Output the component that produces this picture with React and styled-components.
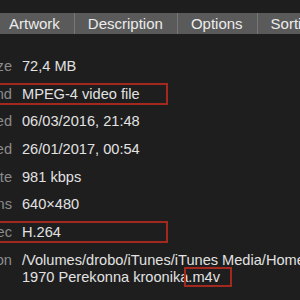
import React from 'react'
import styled, { createGlobalStyle } from 'styled-components'

const GlobalStyle = createGlobalStyle`
  body {
    margin: 0;
    background: #1e1e1e;
  }
`

const Window = styled.div`
  width: 300px;
  height: 300px;
  overflow: hidden;
  padding-top: 13px;
  box-sizing: border-box;
  background: #1e1e1e;
  font-family: 'Liberation Sans', Arial, sans-serif;
`

const TabBar = styled.div`
  display: flex;
  height: 21px;
  margin-left: -4px;
  background: #5a5a5a;
  white-space: nowrap;
`

const Tab = styled.div`
  display: flex;
  align-items: center;
  padding: 0 14px 0 13px;
  color: #ececec;
  font-size: 15px;
  border-left: ${p => (p.first ? 'none' : '1px solid #777')};
`

const Info = styled.div`
  display: flex;
  flex-direction: column;
  gap: 10.7px;
  margin-top: 24px;
`

const Row = styled.div`
  position: relative;
  display: grid;
  grid-template-columns: 12px 1fr;
  column-gap: 10px;
  font-size: 14.6px;
  line-height: 17px;

  &::after {
    content: '';
    display: ${p => (p.marked ? 'block' : 'none')};
    position: absolute;
    top: -3px;
    bottom: -2px;
    left: -10px;
    width: 178px;
    border: 2px solid #a3291f;
    box-sizing: border-box;
  }
`

const Label = styled.div`
  color: #8c8c8c;
  direction: rtl;
  text-align: right;
  overflow: hidden;
  white-space: nowrap;
`

const Value = styled.div`
  color: #e2e2e2;
  white-space: nowrap;
`

const Mark = styled.span`
  position: relative;

  &::after {
    content: '';
    position: absolute;
    top: -2px;
    bottom: -2px;
    left: -4px;
    right: -12px;
    border: 2px solid #a3291f;
  }
`

const tabs = ['Artwork', 'Description', 'Options', 'Sorting']

const rows = [
  { label: 'Size', value: '72,4 MB' },
  { label: 'Kind', value: 'MPEG-4 video file', marked: true },
  { label: 'Date modified', value: '06/03/2016, 21:48' },
  { label: 'Date added', value: '26/01/2017, 00:54' },
  { label: 'Bit rate', value: '981 kbps' },
  { label: 'Dimensions', value: '640×480' },
  { label: 'Video codec', value: 'H.264', marked: true },
]

function App() {
  return (
    <Window>
      <GlobalStyle />
      <TabBar>
        {tabs.map((t, i) => (
          <Tab key={t} first={i === 0}>
            {t}
          </Tab>
        ))}
      </TabBar>
      <Info>
        {rows.map(r => (
          <Row key={r.label} marked={r.marked}>
            <Label>{r.label}</Label>
            <Value>{r.value}</Value>
          </Row>
        ))}
        <Row>
          <Label>Location</Label>
          <Value>
            /Volumes/drobo/iTunes/iTunes Media/Home Videos/
            <br />
            1970 Perekonna kroonika<Mark>.m4v</Mark>
          </Value>
        </Row>
      </Info>
    </Window>
  )
}

export default App
